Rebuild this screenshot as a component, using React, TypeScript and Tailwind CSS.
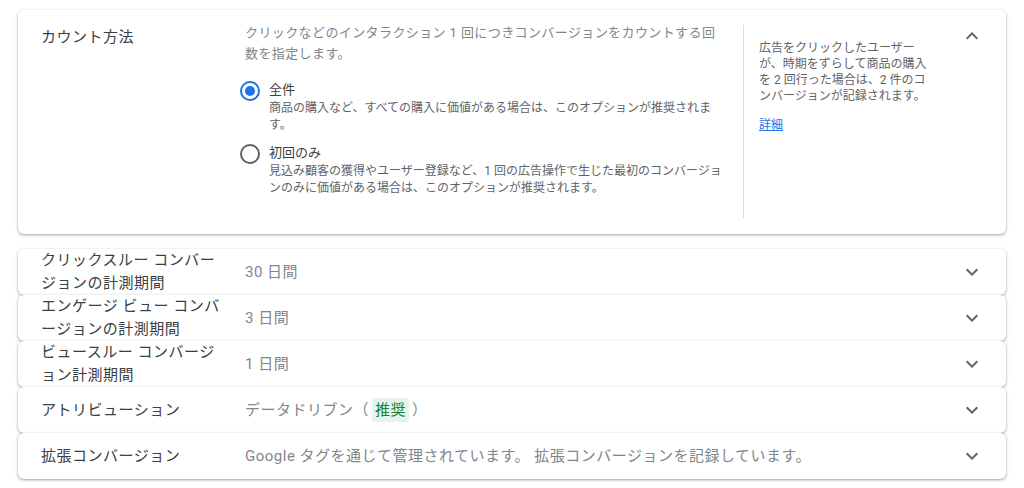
import React from "react";

const FONT = 'Roboto, "Noto Sans CJK JP", "Noto Sans", sans-serif';
const CARD_SHADOW =
  "shadow-[0_1px_2px_0_rgba(60,64,67,0.3),0_1px_3px_1px_rgba(60,64,67,0.15)]";

function ExpandIcon({ up }: { up?: boolean }) {
  return (
    <svg width="24" height="24" viewBox="0 0 24 24" className="shrink-0 fill-[#5f6368]">
      {up ? (
        <path d="M12 8l-6 6 1.41 1.41L12 10.83l4.59 4.58L18 14z" />
      ) : (
        <path d="M16.59 8.59L12 13.17 7.41 8.59 6 10l6 6 6-6z" />
      )}
    </svg>
  );
}

function Radio({ checked }: { checked?: boolean }) {
  return checked ? (
    <span className="mt-[1px] flex h-[20px] w-[20px] shrink-0 items-center justify-center rounded-full border-2 border-[#1a73e8]">
      <span className="h-[10px] w-[10px] rounded-full bg-[#1a73e8]" />
    </span>
  ) : (
    <span className="mt-[1px] h-[20px] w-[20px] shrink-0 rounded-full border-2 border-[#5f6368]" />
  );
}

type Row = { label: string[]; value: React.ReactNode };

// label lines are split the way the column wraps them
const ROWS: Row[] = [
  { label: ["クリックスルー コンバー", "ジョンの計測期間"], value: "30 日間" },
  { label: ["エンゲージ ビュー コンバ", "ージョンの計測期間"], value: "3 日間" },
  { label: ["ビュースルー コンバージ", "ョン計測期間"], value: "1 日間" },
  {
    label: ["アトリビューション"],
    value: (
      <>
        データドリブン（
        <span className="mx-[3px] rounded-[3px] bg-[#e6f4ea] px-[3px] py-[3px] text-[#188038]">推奨</span>
        ）
      </>
    ),
  },
  {
    label: ["拡張コンバージョン"],
    value: "Google タグを通じて管理されています。 拡張コンバージョンを記録しています。",
  },
];

export default function App() {
  return (
    <div
      className="h-[488px] w-[1024px] overflow-hidden bg-white px-[18px] pt-[10px]"
      style={{ fontFamily: FONT }}
    >
      {/* Expanded card */}
      <div className={`flex h-[224px] items-start rounded-[6px] bg-white pr-[22px] ${CARD_SHADOW}`}>
        <div className="w-[227px] shrink-0 pl-[23px] pt-[17px] text-[15px] leading-[20px] tracking-[0.5px] text-[#3c4043]">
          カウント方法
        </div>

        <div className="w-[480px] shrink-0 pt-[12px]">
          <p className="w-[478px] text-[13px] leading-[21px] tracking-[0.4px] text-[#80868b]">
            クリックなどのインタラクション 1 回につきコンバージョンをカウントする回数を指定します。
          </p>
          <div className="-ml-[5px] mt-[16px] flex flex-col gap-[9px]">
            <div className="flex gap-[9px]">
              <Radio checked />
              <div>
                <div className="text-[13px] leading-[20px] text-[#3c4043]">全件</div>
                <div className="text-[12px] leading-[17px] text-[#5f6368]">
                  商品の購入など、すべての購入に価値がある場合は、このオプションが推奨されます。
                </div>
              </div>
            </div>
            <div className="flex gap-[9px]">
              <Radio />
              <div>
                <div className="text-[13px] leading-[20px] text-[#3c4043]">初回のみ</div>
                <div className="text-[12px] leading-[17px] text-[#5f6368]">
                  見込み顧客の獲得やユーザー登録など、1 回の広告操作で生じた最初のコンバージョンのみに価値がある場合は、このオプションが推奨されます。
                </div>
              </div>
            </div>
          </div>
        </div>

        <div className="mb-[16px] ml-[18px] mt-[15px] flex h-[193px] w-[190px] shrink-0 flex-col border-l border-[#dadce0] pl-[15px] pt-[15px]">
          <p className="w-[172px] text-[12px] leading-[16px] text-[#5f6368]">
            広告をクリックしたユーザーが、時期をずらして商品の購入を 2 回行った場合は、2 件のコンバージョンが記録されます。
          </p>
          <a className="mt-[13px] text-[12px] leading-[16px] text-[#1a73e8] underline">詳細</a>
        </div>

        <div className="ml-auto pt-[14px]">
          <ExpandIcon up />
        </div>
      </div>

      {/* Collapsed rows */}
      <div className="mt-[15px] flex flex-col">
        {ROWS.map((row, i) => (
          <div
            key={i}
            className={`flex h-[46px] items-center rounded-[6px] bg-white pr-[22px] ${CARD_SHADOW}`}
          >
            <div className="w-[227px] shrink-0 whitespace-nowrap pl-[23px] text-[15px] leading-[23px] tracking-[0.5px] text-[#3c4043]">
              {row.label.map((line) => (
                <div key={line}>{line}</div>
              ))}
            </div>
            <div className="flex-1 text-[15px] leading-[20px] tracking-[0.5px] text-[#80868b]">
              {row.value}
            </div>
            <ExpandIcon />
          </div>
        ))}
      </div>
    </div>
  );
}
